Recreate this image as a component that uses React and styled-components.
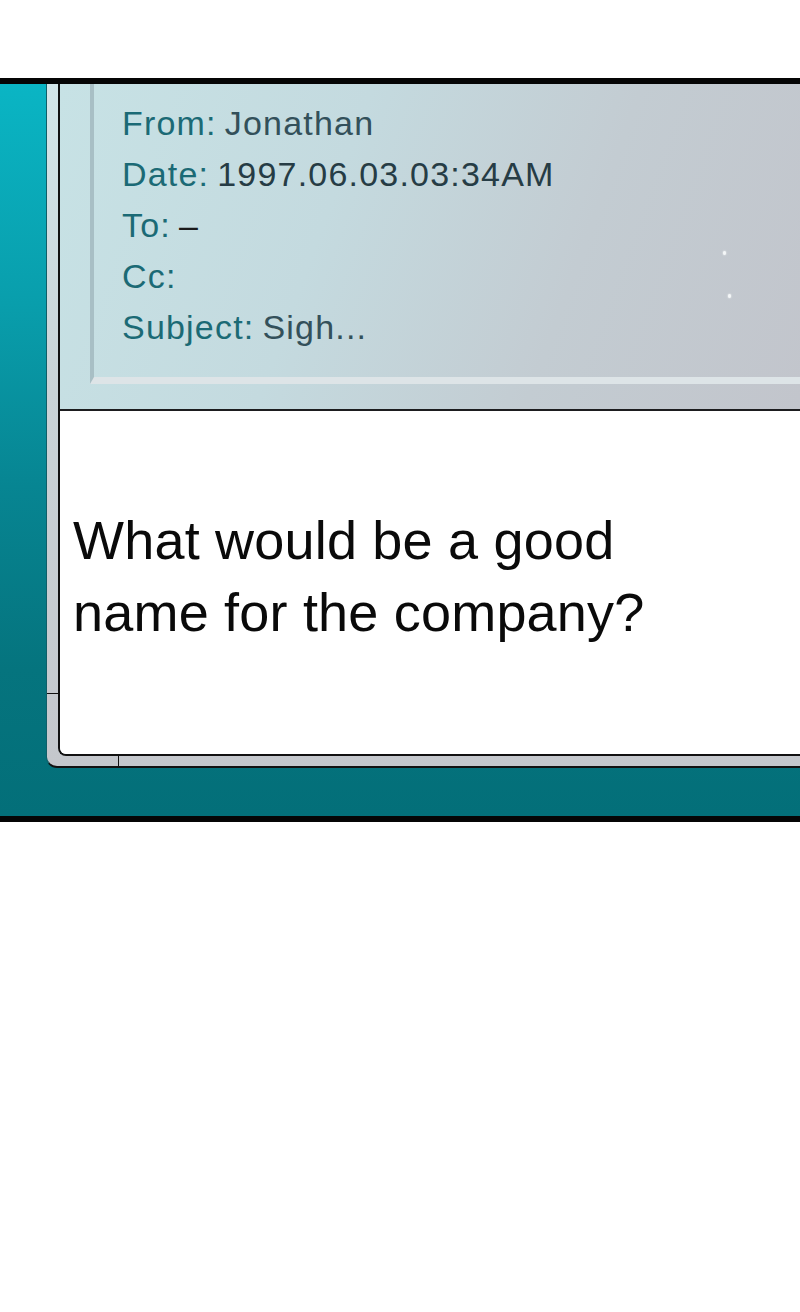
import styled, { createGlobalStyle } from "styled-components";

const GlobalStyle = createGlobalStyle`
  html, body {
    margin: 0;
    padding: 0;
    background: #ffffff;
  }
  body {
    font-family: "Liberation Sans", Arial, sans-serif;
  }
`;

const Page = styled.div`
  width: 800px;
  height: 1312px;
  padding-top: 78px;
  box-sizing: border-box;
  background: #ffffff;
`;

// teal desktop strip with thick black rules top and bottom
const Panel = styled.section`
  display: flex;
  flex-direction: column;
  border-top: 6px solid #050505;
  border-bottom: 6px solid #050505;
  padding: 0 0 48px 46px;
  overflow: hidden;
  background: linear-gradient(
    180deg,
    #0ab5c4 0%,
    #099eac 30%,
    #078592 55%,
    #05747e 80%,
    #036f79 100%
  );
`;

// outer grey frame of the mail window
const Window = styled.div`
  position: relative;
  width: 780px;
  padding: 0 0 10px 11px;
  border-left: 1px solid #0f5f68;
  border-bottom: 2px solid #111;
  border-bottom-left-radius: 11px;
  background: linear-gradient(180deg, #d2e6e9 0%, #c9d3d7 45%, #c4c7cc 100%);

  &::before {
    content: "";
    position: absolute;
    left: 0;
    top: 609px;
    width: 11px;
    height: 1px;
    background: #111;
  }

  &::after {
    content: "";
    position: absolute;
    left: 71px;
    bottom: 0;
    width: 1px;
    height: 10px;
    background: #111;
  }
`;

const Inner = styled.div`
  display: flex;
  flex-direction: column;
  border-left: 2px solid #111;
  border-bottom: 2px solid #111;
  border-bottom-left-radius: 8px;
  overflow: hidden;
`;

const Header = styled.header`
  position: relative;
  height: 325px;
  padding-left: 30px;
  border-bottom: 2px solid #1d1d1f;
  background: linear-gradient(
    110deg,
    #c7e2e5 0%,
    #c4dadf 35%,
    #c3ccd2 65%,
    #c2c4cb 100%
  );
`;

const Inset = styled.div`
  display: flex;
  flex-direction: column;
  height: 279px;
  padding: 14px 0 0 28px;
  border-left: 4px solid #a8bfc5;
  border-bottom: 7px solid #dde4e7;
`;

const Field = styled.div`
  display: flex;
  align-items: center;
  gap: 8px;
  height: 51px;
  font-size: 34px;
  letter-spacing: 1.2px;
  white-space: nowrap;
`;

const Label = styled.span`
  color: #1b6a75;
`;

const Value = styled.span`
  color: ${(p) => p.$tone || "#33505a"};
`;

const Sparkle = styled.span`
  position: absolute;
  left: ${(p) => p.$x}px;
  top: ${(p) => p.$y}px;
  width: 3px;
  height: 4px;
  border-radius: 50%;
  background: #f4f7f8;
  box-shadow: 0 0 2px #ffffff;
`;

const Body = styled.div`
  height: 343px;
  box-sizing: border-box;
  padding: 93px 0 0 13px;
  background: #ffffff;
`;

const Message = styled.p`
  margin: 0;
  font-size: 54px;
  line-height: 72px;
  color: #0a0a0a;
  letter-spacing: 0.2px;
`;

const fields = [
  { label: "From:", value: "Jonathan" },
  { label: "Date:", value: "1997.06.03.03:34AM", tone: "#263c45" },
  { label: "To:", value: "–", tone: "#1a1a1a" },
  { label: "Cc:", value: "" },
  { label: "Subject:", value: "Sigh..." },
];

export default function App() {
  return (
    <>
      <GlobalStyle />
      <Page>
        <Panel>
          <Window>
            <Inner>
              <Header>
                <Inset>
                  {fields.map((f) => (
                    <Field key={f.label}>
                      <Label>{f.label}</Label>
                      <Value $tone={f.tone}>{f.value}</Value>
                    </Field>
                  ))}
                </Inset>
                <Sparkle $x={663} $y={167} />
                <Sparkle $x={668} $y={210} />
              </Header>
              <Body>
                <Message>
                  What would be a good
                  <br />
                  name for the company?
                </Message>
              </Body>
            </Inner>
          </Window>
        </Panel>
      </Page>
    </>
  );
}
